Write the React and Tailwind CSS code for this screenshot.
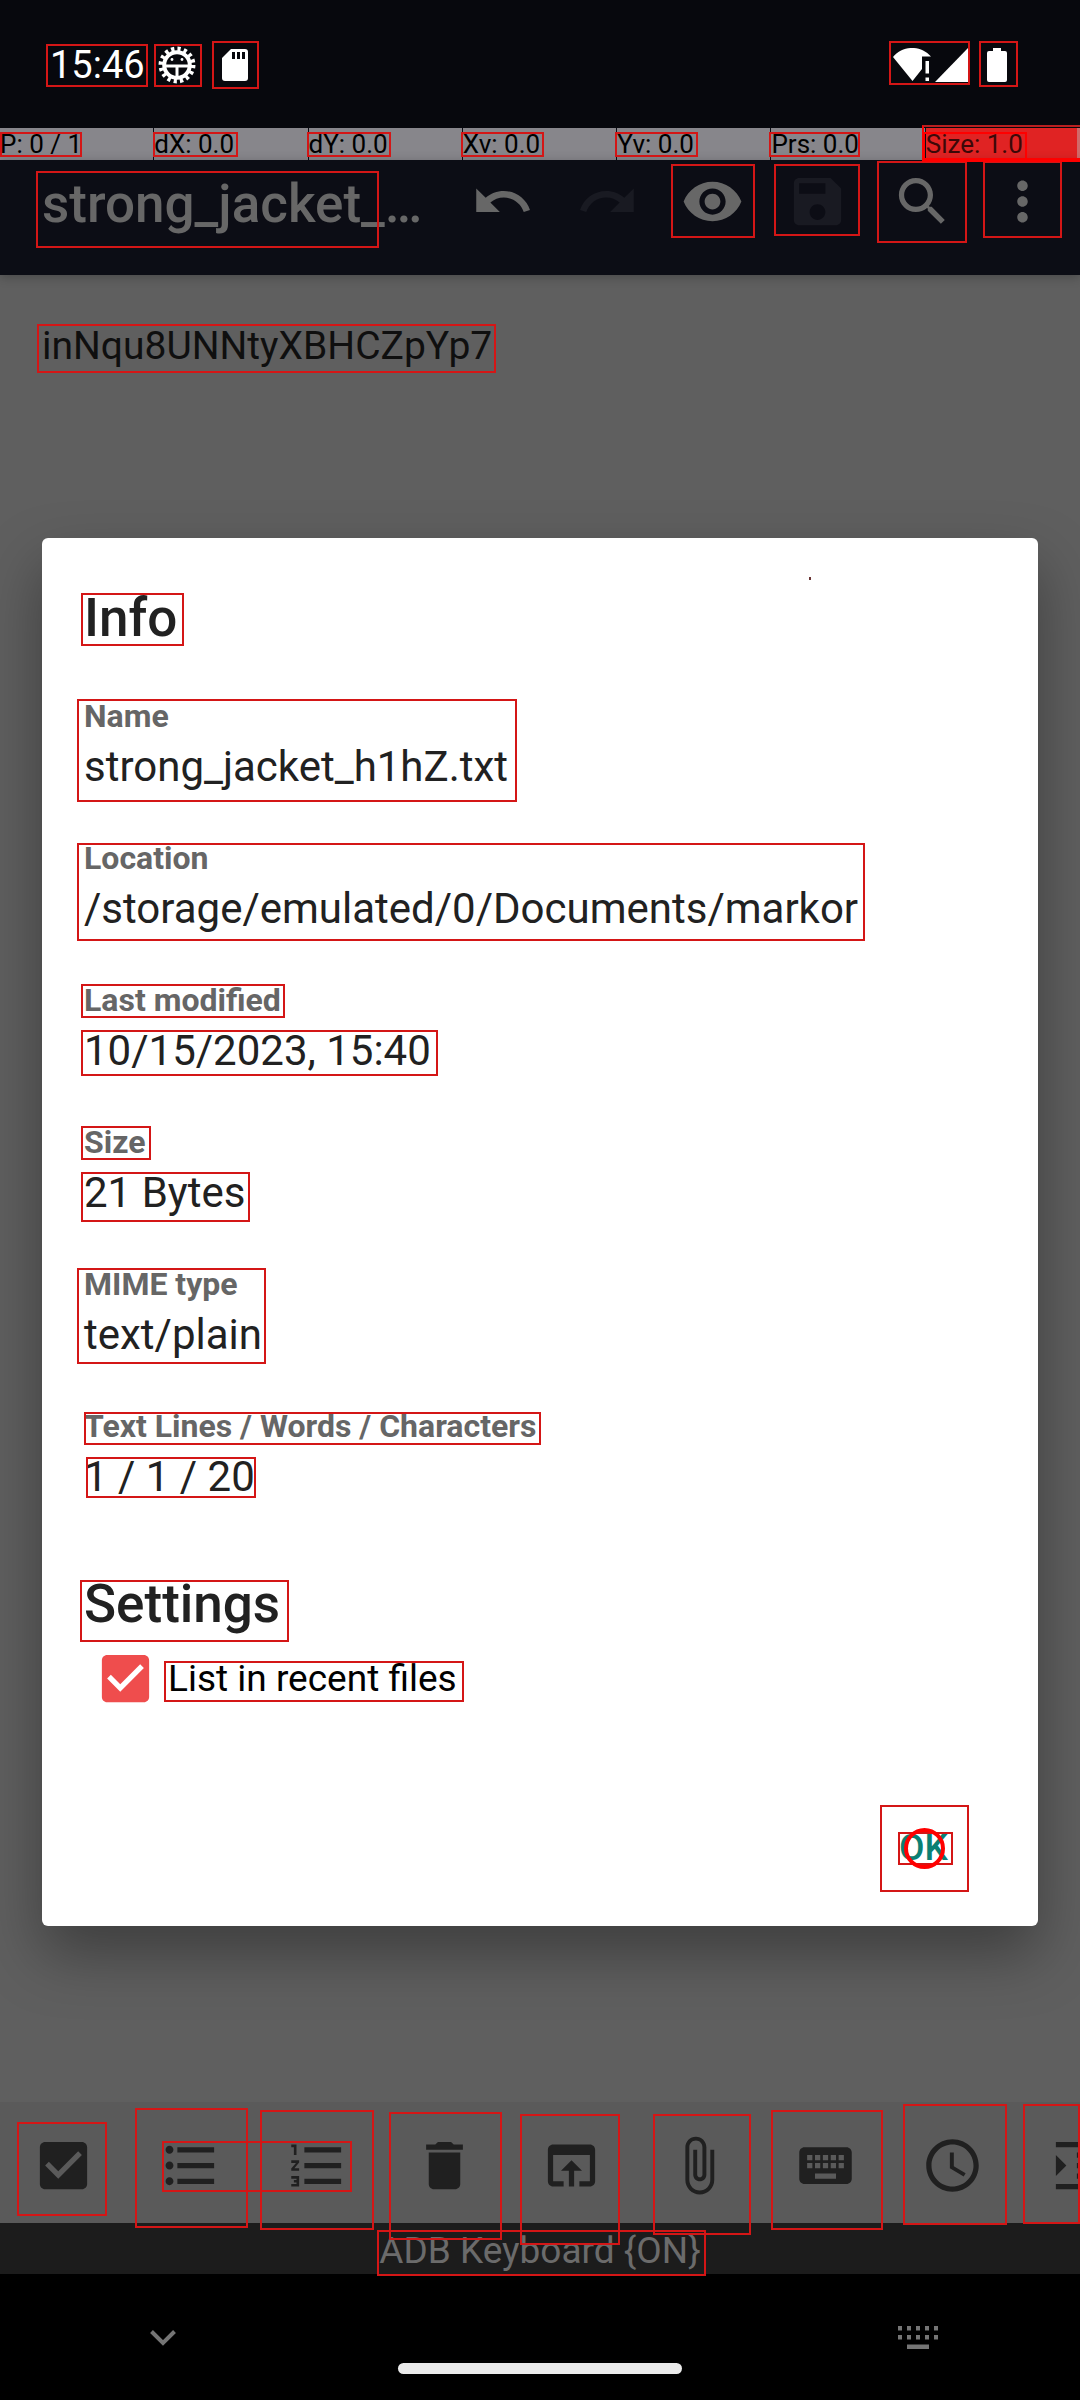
import React from "react";

const ICONS = {
  undo: "M12.5 8c-2.65 0-5.05.99-6.9 2.6L2 7v9h9l-3.62-3.62c1.39-1.16 3.16-1.88 5.12-1.88 3.54 0 6.55 2.31 7.6 5.5l2.37-.78C21.08 11.03 17.15 8 12.5 8z",
  redo: "M18.4 10.6C16.55 8.99 14.15 8 11.5 8c-4.65 0-8.58 3.03-9.96 7.22L3.9 16c1.05-3.19 4.05-5.5 7.6-5.5 1.95 0 3.73.72 5.12 1.88L13 16h9V7l-3.6 3.6z",
  eye: "M12 4.5C7 4.5 2.73 7.61 1 12c1.73 4.39 6 7.5 11 7.5s9.27-3.11 11-7.5c-1.73-4.39-6-7.5-11-7.5zM12 17c-2.76 0-5-2.24-5-5s2.24-5 5-5 5 2.24 5 5-2.24 5-5 5zm0-8c-1.66 0-3 1.34-3 3s1.34 3 3 3 3-1.34 3-3-1.34-3-3-3z",
  save: "M17 3H5c-1.11 0-2 .9-2 2v14c0 1.1.89 2 2 2h14c1.1 0 2-.9 2-2V7l-4-4zm-5 16c-1.66 0-3-1.34-3-3s1.34-3 3-3 3 1.34 3 3-1.34 3-3 3zm3-10H5V5h10v4z",
  search: "M15.5 14h-.79l-.28-.27C15.41 12.59 16 11.11 16 9.5 16 5.91 13.09 3 9.5 3S3 5.91 3 9.5 5.91 16 9.5 16c1.61 0 3.09-.59 4.23-1.57l.27.28v.79l5 4.99L20.49 19l-4.99-5zm-6 0C7.01 14 5 11.99 5 9.5S7.01 5 9.5 5 14 7.01 14 9.5 11.99 14 9.5 14z",
  more: "M12 8c1.1 0 2-.9 2-2s-.9-2-2-2-2 .9-2 2 .9 2 2 2zm0 2c-1.1 0-2 .9-2 2s.9 2 2 2 2-.9 2-2-.9-2-2-2zm0 6c-1.1 0-2 .9-2 2s.9 2 2 2 2-.9 2-2-.9-2-2-2z",
  check: "M19 3H5c-1.11 0-2 .9-2 2v14c0 1.1.89 2 2 2h14c1.11 0 2-.9 2-2V5c0-1.1-.89-2-2-2zm-9 14l-5-5 1.41-1.41L10 14.17l7.59-7.59L19 8l-9 9z",
  bullets: "M4 10.5c-.83 0-1.5.67-1.5 1.5s.67 1.5 1.5 1.5 1.5-.67 1.5-1.5-.67-1.5-1.5-1.5zm0-6c-.83 0-1.5.67-1.5 1.5S3.17 7.5 4 7.5 5.5 6.83 5.5 6 4.83 4.5 4 4.5zm0 12c-.83 0-1.5.68-1.5 1.5s.68 1.5 1.5 1.5 1.5-.68 1.5-1.5-.67-1.5-1.5-1.5zM7 19h14v-2H7v2zm0-6h14v-2H7v2zm0-8v2h14V5H7z",
  numbers: "M2 17h2v.5H3v1h1v.5H2v1h3v-4H2v1zm1-9h1V4H2v1h1v3zm-1 3h1.8L2 13.1v.9h3v-1H3.2L5 10.9V10H2v1zm5-6v2h14V5H7zm0 14h14v-2H7v2zm0-6h14v-2H7v2z",
  trash: "M6 19c0 1.1.9 2 2 2h8c1.1 0 2-.9 2-2V7H6v12zM19 4h-3.5l-1-1h-5l-1 1H5v2h14V4z",
  open: "M19 4H5c-1.11 0-2 .9-2 2v12c0 1.1.89 2 2 2h4v-2H5V8h14v10h-4v2h4c1.1 0 2-.9 2-2V6c0-1.1-.89-2-2-2zm-7 6l-4 4h3v6h2v-6h3l-4-4z",
  attach: "M16.5 6v11.5c0 2.21-1.79 4-4 4s-4-1.79-4-4V5c0-1.38 1.12-2.5 2.5-2.5s2.5 1.12 2.5 2.5v10.5c0 .55-.45 1-1 1s-1-.45-1-1V6H10v9.5c0 1.38 1.12 2.5 2.5 2.5s2.5-1.12 2.5-2.5V5c0-2.21-1.79-4-4-4S7 2.79 7 5v12.5c0 3.04 2.46 5.5 5.5 5.5s5.5-2.46 5.5-5.5V6h-1.5z",
  keyboard: "M20 5H4c-1.1 0-1.99.9-1.99 2L2 17c0 1.1.9 2 2 2h16c1.1 0 2-.9 2-2V7c0-1.1-.9-2-2-2zm-9 3h2v2h-2V8zm0 3h2v2h-2v-2zM8 8h2v2H8V8zm0 3h2v2H8v-2zm-1 2H5v-2h2v2zm0-3H5V8h2v2zm9 7H8v-2h8v2zm0-4h-2v-2h2v2zm0-3h-2V8h2v2zm3 3h-2v-2h2v2zm0-3h-2V8h2v2z",
  clock: "M11.99 2C6.47 2 2 6.48 2 12s4.47 10 9.99 10C17.52 22 22 17.52 22 12S17.52 2 11.99 2zM12 20c-4.42 0-8-3.58-8-8s3.58-8 8-8 8 3.58 8 8-3.58 8-8 8zm.5-13H11v6l5.25 3.15.75-1.23-4.5-2.67z",
  indent: "M3 21h18v-2H3v2zM3 8v8l4-4-4-4zm8 9h10v-2H11v2zM3 3v2h18V3H3zm8 6h10V7H11v2zm0 4h10v-2H11v2z",
};

function Icon({ name, className = "" }) {
  return (
    <svg viewBox="0 0 24 24" fill="currentColor" aria-hidden="true" className={`size-[63px] shrink-0 ${className}`}>
      <path d={ICONS[name]} />
    </svg>
  );
}

function GearIcon() {
  return (
    <svg viewBox="0 0 38 38" className="size-[38px]" aria-hidden="true">
      <circle cx="19" cy="19" r="16.2" fill="none" stroke="#fff" strokeWidth="4.500" strokeDasharray="3.200 3.160" />
      <circle cx="19" cy="19" r="12.800" fill="none" stroke="#fff" strokeWidth="4" />
      <path d="M6 20h26M19 20V32" stroke="#fff" strokeWidth="3" />
      <circle cx="14" cy="13.5" r="1.4" fill="#fff" />
      <circle cx="24" cy="13.5" r="1.4" fill="#fff" />
    </svg>
  );
}

function StatusBar() {
  return (
    <header className="flex h-32 items-center bg-[#07080d] pl-[50px] pr-[73px] pt-0.5 text-white">
      <span className="text-[38px] leading-[43px]">15:46</span>
      <div className="ml-[13px] flex items-center">
        <GearIcon />
        <svg viewBox="0 0 26 32" className="ml-[26px] h-8 w-[26px]" aria-hidden="true">
          <path d="M9 0h14a3 3 0 0 1 3 3v26a3 3 0 0 1-3 3H3a3 3 0 0 1-3-3V9z" fill="#fff" />
          <path d="M10 3h3v7h-3zM15 3h3v7h-3zM20 3h3v7h-3z" fill="#07080d" />
        </svg>
      </div>
      <svg viewBox="0 0 38 34" className="ml-auto h-[34px] w-[38px]" aria-hidden="true">
        <path d="M0 9C10-3 28-3 38 8.500H29V21L19.500 33z" fill="#fff" />
        <path d="M32.500 13h3.500v12.500h-3.500zM32.500 29.500h3.500v3.500h-3.500z" fill="#fff" />
      </svg>
      <svg viewBox="0 0 33 34" className="ml-1 h-[34px] w-[33px]" aria-hidden="true">
        <path d="M33 0v34H0z" fill="#fff" />
      </svg>
      <svg viewBox="0 0 20 34" className="ml-[19px] h-[34px] w-5" aria-hidden="true">
        <path d="M6 0h8v3h4a2 2 0 0 1 2 2v27a2 2 0 0 1-2 2H2a2 2 0 0 1-2-2V5a2 2 0 0 1 2-2h4z" fill="#fff" />
      </svg>
    </header>
  );
}

function PointerStats() {
  const cells = ["P: 0 / 1", "dX: 0.0", "dY: 0.0", "Xv: 0.0", "Yv: 0.0", "Prs: 0.0", "Size: 1.0"];
  return (
    <div className="grid h-8 grid-cols-7 text-[26px] leading-8 text-black">
      {cells.map((c) => (
        <div
          key={c}
          className="whitespace-nowrap border-r border-[#0c0d15] bg-[#87868b] last:border-r-[3px] last:border-[#d06a6a] last:bg-[#e02323] last:text-[#3d0808]"
        >
          {c}
        </div>
      ))}
    </div>
  );
}

function AppBar() {
  const actions = [
    ["undo", "Undo", false],
    ["redo", "Redo", true],
    ["eye", "View mode", false],
    ["save", "Save", true],
    ["search", "Search", false],
  ];
  return (
    <div className="relative flex h-[115px] items-center bg-[#0c0d15] pb-8 pl-[42px] pr-2.5 text-[#676767] shadow-[0_2px_10px_rgba(0,0,0,0.25)]">
      <h1 className="min-w-0 flex-1 pr-5 pt-1 text-[53px] font-medium leading-[64px]">strong_jacket_…</h1>
      {actions.map(([icon, label, off]) => (
        <button key={icon} aria-label={label} disabled={off} className="flex w-[105px] shrink-0 justify-center disabled:text-[#191a22]">
          <Icon name={icon} />
        </button>
      ))}
      <button aria-label="More options" className="flex w-[95px] shrink-0 justify-center">
        <Icon name="more" />
      </button>
    </div>
  );
}

function Toolbar() {
  const tools = [
    ["check", "Checkbox"],
    ["bullets", "Bulleted list"],
    ["numbers", "Numbered list"],
    ["trash", "Delete lines"],
    ["open", "Open externally"],
    ["attach", "Attach"],
    ["keyboard", "Special key"],
    ["clock", "Date and time"],
    ["indent", "Indent"],
  ];
  return (
    <nav className="flex h-[121px] items-center overflow-hidden bg-[#5a5a5a] pt-1.5 text-[#202020]">
      {tools.map(([icon, label]) => (
        <button key={icon} aria-label={label} className="flex h-full w-[127px] shrink-0 items-center justify-center">
          <Icon name={icon} />
        </button>
      ))}
    </nav>
  );
}

function KeyboardArea() {
  return (
    <footer>
      <div className="h-[51px] bg-[#1c1c1c] text-center text-[37px] leading-[55px] text-[#6b6b6b]">{"ADB Keyboard {ON}"}</div>
      <div className="relative flex h-[126px] items-start justify-between bg-black pl-[150px] pr-[142px] pt-[52px] text-[#757575]">
        <button aria-label="Hide keyboard" className="pt-1">
          <svg viewBox="0 0 26 16" className="h-4 w-[26px]" fill="none" stroke="currentColor" strokeWidth="4" aria-hidden="true">
            <path d="M1.500 1.500L13 13L24.500 1.500" />
          </svg>
        </button>
        <button aria-label="Choose input method">
          <svg viewBox="0 0 40 23" className="h-[23px] w-10" fill="currentColor" aria-hidden="true">
            {[0, 9, 18, 27, 36].map((x) => (
              <path key={x} d={`M${x} 0h4v4.500h-4zM${x} 9h4v4.500h-4z`} />
            ))}
            <path d="M9 18.500h22V23H9z" />
          </svg>
        </button>
        <div className="absolute bottom-[26px] left-1/2 h-[11px] w-[284px] -translate-x-1/2 rounded-full bg-[#ebebeb]" />
      </div>
    </footer>
  );
}

const DETAILS = [
  ["Name", "strong_jacket_h1hZ.txt"],
  ["Location", "/storage/emulated/0/Documents/markor"],
  ["Last modified", "10/15/2023, 15:40"],
  ["Size", "21 Bytes"],
  ["MIME type", "text/plain"],
  ["Text Lines / Words / Characters", "1 / 1 / 20"],
];

function InfoDialog() {
  return (
    <section
      role="dialog"
      aria-labelledby="info-title"
      className="absolute inset-x-[42px] top-[538px] flex flex-col rounded-[6px] bg-white px-[42px] pb-[34px] pt-[49px] text-[#212121] shadow-[0_28px_60px_rgba(0,0,0,0.35)]"
    >
      <h2 id="info-title" className="text-[53px] font-medium leading-[62px]">Info</h2>
      <dl className="mt-[47px] flex flex-col gap-[45px]">
        {DETAILS.map(([label, value]) => (
          <div key={label} className="flex flex-col gap-[5px]">
            <dt className="text-[32px] font-bold leading-[40px] text-[#666666]">{label}</dt>
            <dd className="text-[42px] leading-[52px]">{value}</dd>
          </div>
        ))}
      </dl>
      <h2 className="mt-[70px] text-[53px] font-medium leading-[62px]">Settings</h2>
      <label className="mt-3 flex items-center pl-[10px] text-[37px] leading-[63px] text-black">
        <input type="checkbox" defaultChecked className="peer sr-only" />
        <Icon name="check" className="text-[#ef4d4d]" />
        <span className="ml-[11px]">List in recent files</span>
      </label>
      <button className="mr-7 mt-[94px] flex h-[88px] w-[89px] items-center justify-center self-end text-[37px] font-medium text-[#0a8074]">OK</button>
    </section>
  );
}

const MARKS = [
  [46, 44, 102, 43], [154, 44, 48, 43], [212, 41, 47, 48], [889, 41, 81, 44], [979, 41, 39, 46],
  [0, 132, 82, 25], [153, 132, 85, 25], [307, 132, 84, 25], [461, 132, 83, 25], [615, 132, 83, 25], [769, 132, 91, 25],
  [36, 171, 343, 77], [671, 164, 84, 74], [774, 164, 86, 72], [877, 161, 90, 82], [983, 161, 79, 77],
  [37, 324, 459, 49], [81, 593, 103, 53], [77, 699, 440, 103], [77, 843, 788, 98], [81, 984, 204, 34],
  [81, 1030, 357, 46], [81, 1126, 70, 34], [81, 1172, 169, 50], [77, 1268, 189, 96], [84, 1412, 457, 33],
  [86, 1457, 170, 41], [80, 1580, 209, 62], [164, 1661, 300, 41], [880, 1805, 89, 87], [898, 1832, 55, 33],
  [17, 2122, 90, 94], [135, 2108, 113, 120], [260, 2110, 114, 120], [162, 2141, 190, 51], [389, 2112, 113, 128],
  [520, 2114, 100, 131], [653, 2114, 98, 121], [771, 2110, 112, 120], [903, 2104, 104, 121], [1023, 2104, 57, 120],
  [377, 2230, 329, 46],
];

function Marks() {
  return (
    <div className="pointer-events-none absolute inset-0" aria-hidden="true">
      {MARKS.map(([left, top, width, height]) => (
        <div key={`${left}-${top}`} className="absolute border-2 border-[#d41616]" style={{ left, top, width, height }} />
      ))}
      <div className="absolute right-0 top-[125px] h-[37px] w-[158px] border-y-2 border-b-4 border-l-2 border-[#ff0000] border-t-[#b82020]" />
      <div className="absolute left-[923px] top-[132px] h-7 w-[104px] border-2 border-[#ff0000]" />
      <div className="absolute left-[904px] top-[1828px] h-[41px] w-[41px] rounded-full border-4 border-[#ff0000]" />
      <div className="absolute left-[809px] top-[577px] h-[3px] w-0.5 bg-[#6a3434]" />
    </div>
  );
}

export default function App() {
  return (
    <div className="relative flex min-h-screen flex-col overflow-hidden bg-[#5f5f5f] font-['Roboto',sans-serif]">
      <StatusBar />
      <PointerStats />
      <AppBar />
      <main className="flex-1 px-[42px] pt-[46px] text-[39px] leading-[50px] text-[#0f0f0f]">inNqu8UNNtyXBHCZpYp7</main>
      <Toolbar />
      <KeyboardArea />
      <InfoDialog />
      <Marks />
    </div>
  );
}
